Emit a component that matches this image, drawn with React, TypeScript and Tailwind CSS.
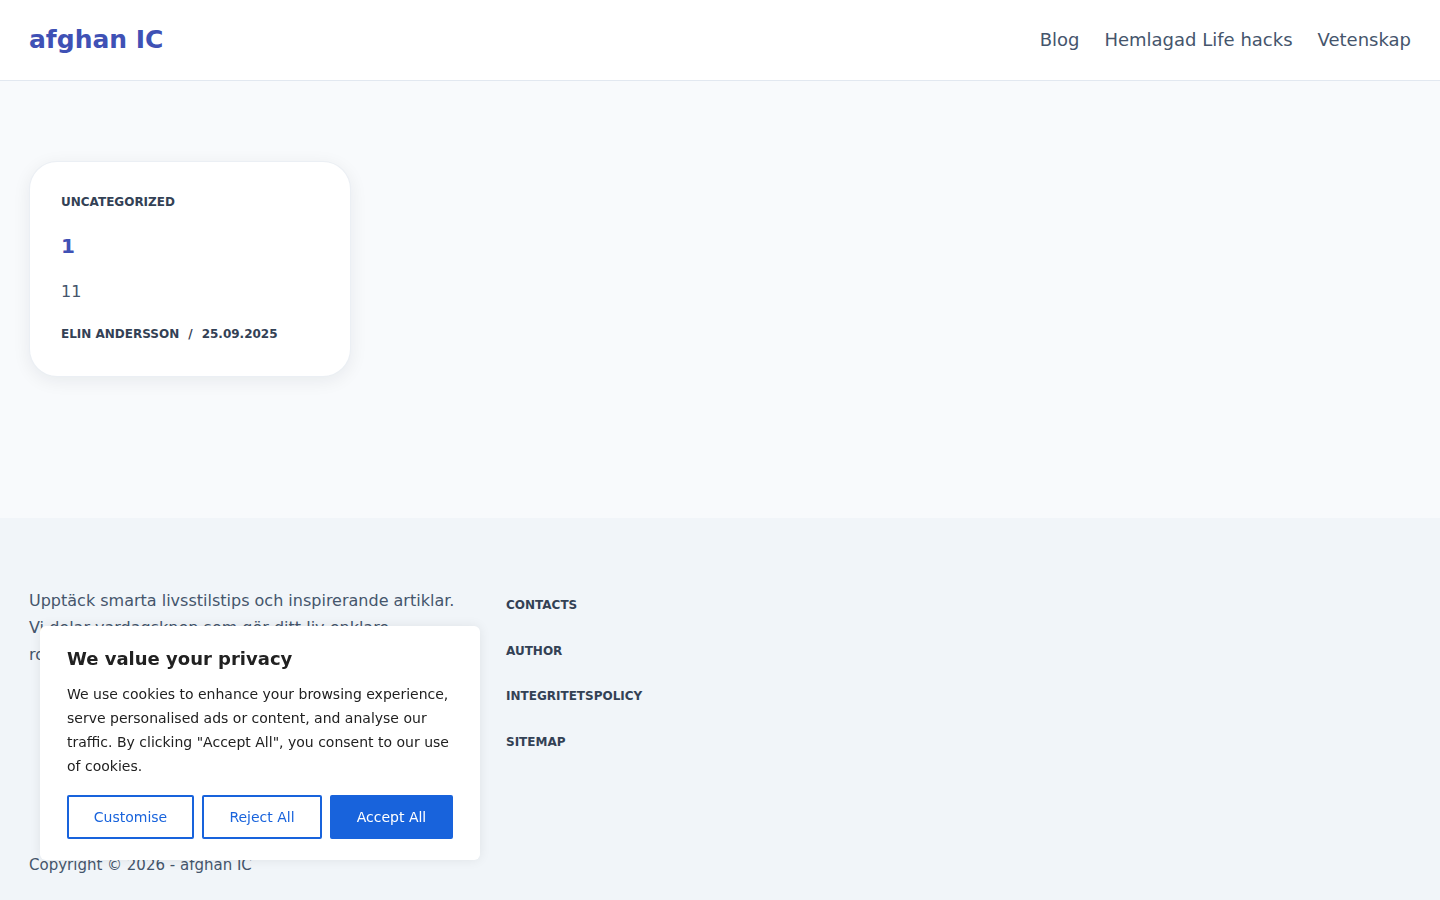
const navLinks = ["Blog", "Hemlagad Life hacks", "Vetenskap"];
const footerLinks = ["Contacts", "Author", "Integritetspolicy", "Sitemap"];

export default function App() {
  return (
    <div className="min-h-screen bg-slate-50 font-['DejaVu_Sans',sans-serif] text-slate-700">
      {/* header */}
      <header className="flex h-[81px] items-center justify-between border-b border-slate-200 bg-white px-[29px]">
        <a className="text-[25px] font-bold text-[#3f51b5]">afghan IC</a>
        <nav className="flex items-center gap-[25px] pb-[1px] text-[18px] text-slate-600">
          {navLinks.map((l) => (
            <a key={l}>{l}</a>
          ))}
        </nav>
      </header>

      {/* posts */}
      <main className="h-[437px] pl-[29px] pt-[80px]">
        <article className="w-[322px] rounded-[28px] border border-slate-200/70 bg-white px-[31px] pb-[33px] pt-[31px] shadow-[0_4px_18px_rgba(15,23,42,0.07)]">
          <span className="block text-[12px] font-bold uppercase text-[#334155]">
            Uncategorized
          </span>
          <h2 className="mt-[20px] text-[20px] font-bold text-[#3f51b5]">1</h2>
          <p className="mt-[19px] text-[16px] text-slate-600">11</p>
          <div className="mt-[21px] flex gap-[9px] text-[12px] font-bold uppercase text-[#334155]">
            <span>Elin Andersson</span>
            <span>/</span>
            <span>25.09.2025</span>
          </div>
        </article>
      </main>

      {/* footer */}
      <footer className="h-[382px] bg-slate-100 px-[29px] pt-[69px]">
        <div className="grid grid-cols-[430px_1fr] gap-[47px]">
          <p className="text-[16px] leading-[27px] text-slate-600">
            Upptäck smarta livsstilstips och inspirerande artiklar. Vi delar
            vardagsknep som gör ditt liv enklare, roligare och mer hållbart.
          </p>
          <ul className="flex flex-col gap-[27.6px] pt-[9px]">
            {footerLinks.map((l) => (
              <li key={l} className="text-[12px] font-bold uppercase leading-[18px] text-[#334155]">
                {l}
              </li>
            ))}
          </ul>
        </div>
        <p className="mt-[102px] text-[15px] leading-[24px] text-slate-600">
          Copyright © 2026 - afghan IC
        </p>
      </footer>

      {/* cookie banner */}
      <div className="fixed bottom-[40px] left-[40px] w-[440px] rounded-md bg-white px-[27px] pb-[21px] pt-[21px] text-[#212121] shadow-[0_0_12px_rgba(0,0,0,0.08)]">
        <h3 className="text-[18px] font-bold leading-[24px]">We value your privacy</h3>
        <p className="mt-[11px] text-[14px] leading-[24px]">
          We use cookies to enhance your browsing experience, serve personalised
          ads or content, and analyse our traffic. By clicking "Accept All", you
          consent to our use of cookies.
        </p>
        <div className="mt-[17px] flex gap-2 text-[14px]">
          <button className="h-[44px] w-[127px] rounded-[2px] border-2 border-[#1863dc] text-[#1863dc]">
            Customise
          </button>
          <button className="h-[44px] w-[120px] rounded-[2px] border-2 border-[#1863dc] text-[#1863dc]">
            Reject All
          </button>
          <button className="h-[44px] w-[123px] rounded-[2px] border-2 border-[#1863dc] bg-[#1863dc] text-white">
            Accept All
          </button>
        </div>
      </div>
    </div>
  );
}
